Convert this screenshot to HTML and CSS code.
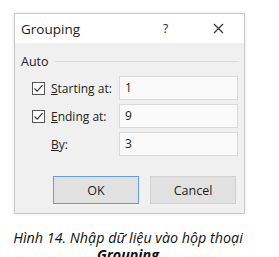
FILE: index.html
```html
<!DOCTYPE html>
<html lang="vi">
<head>
  <meta charset="UTF-8">
  <title>Grouping</title>
  <link rel="stylesheet" href="styles.css">
</head>
<body>
  <div class="dialog">
    <div class="titlebar">
      <span class="title">Grouping</span>
      <span class="help">?</span>
      <span class="close">
        <svg width="11" height="11" viewBox="0 0 11 11"><path d="M1 1L10 10M10 1L1 10" stroke="#333" stroke-width="1.2" fill="none"/></svg>
      </span>
    </div>
    <div class="content">
      <div class="group-head">
        <span>Auto</span>
        <span class="group-line"></span>
      </div>
      <div class="row">
        <span class="check"><svg width="13" height="13" viewBox="0 0 13 13"><rect x="0.5" y="0.5" width="12" height="12" fill="#fff" stroke="#555"/><path d="M2.5 6.5L5.2 9.2L10.5 3.2" stroke="#333" stroke-width="1.1" fill="none"/></svg></span>
        <span class="label"><u>S</u>tarting at:</span>
        <span class="field">1</span>
      </div>
      <div class="row">
        <span class="check"><svg width="13" height="13" viewBox="0 0 13 13"><rect x="0.5" y="0.5" width="12" height="12" fill="#fff" stroke="#555"/><path d="M2.5 6.5L5.2 9.2L10.5 3.2" stroke="#333" stroke-width="1.1" fill="none"/></svg></span>
        <span class="label"><u>E</u>nding at:</span>
        <span class="field">9</span>
      </div>
      <div class="row">
        <span class="check empty"></span>
        <span class="label"><u>B</u>y:</span>
        <span class="field">3</span>
      </div>
      <div class="buttons">
        <button class="btn default">OK</button>
        <button class="btn">Cancel</button>
      </div>
    </div>
  </div>
  <p class="caption">Hình 14. Nhập dữ liệu vào hộp thoại<br><b>Grouping</b></p>
</body>
</html>
```

FILE: styles.css
```css
body {
  margin: 0;
  padding: 13px 0 0 14px;
  background-color: #fff;
  font-family: "Open Sans", "Noto Sans", sans-serif;
  color: #222;
}
.dialog {
  width: 229px;
  border: 1px solid #c9c9c9;
  box-shadow: 0 0 3px rgba(0, 0, 0, 0.12);
  background-color: #f0f0f0;
}
.titlebar {
  height: 29px;
  background-color: #fff;
  display: flex;
  align-items: center;
  padding-left: 6px;
  font-size: 13.5px;
}
.title {
  width: 142px;
}
.help {
  width: 50px;
  font-size: 12px;
}
.close {
  display: flex;
}
.content {
  padding: 8px 0 9px 17px;
}
.group-head {
  display: flex;
  align-items: center;
  margin-left: -11px;
  font-size: 12.5px;
  height: 20px;
}
.group-line {
  flex: 1;
  height: 1px;
  background-color: #dcdcdc;
  margin: 0 5px 0 5px;
}
.row {
  display: flex;
  align-items: center;
  margin-top: 5px;
  height: 24px;
  font-size: 12px;
}
.row + .row {
  margin-top: 4px;
}
.check {
  display: flex;
  width: 13px;
  height: 13px;
  margin-right: 6px;
}
.label {
  width: 68px;
}
.field {
  width: 112px;
  height: 22px;
  line-height: 22px;
  padding-left: 5px;
  background-color: #fafafa;
  border: 1px solid #dadada;
}
.buttons {
  display: flex;
  gap: 11px;
  margin-top: 20px;
  padding-left: 21px;
}
.btn {
  width: 86px;
  height: 28px;
  font-family: inherit;
  font-size: 12.5px;
  color: #222;
  background-color: #e1e1e1;
  border: 1px solid #d0d0d0;
}
.btn.default {
  border: 1.5px solid #5f9ddc;
}
.caption {
  margin: 15px 0 0 -6px;
  width: 240px;
  text-align: center;
  font-style: italic;
  font-size: 14.3px;
  line-height: 17px;
  color: #111;
}
```
